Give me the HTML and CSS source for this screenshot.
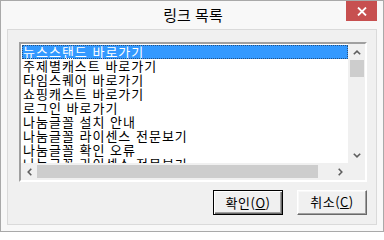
FILE: index.html
```html
<!DOCTYPE html>
<html lang="ko">
<head>
<meta charset="utf-8">
<title>링크 목록</title>
<link rel="stylesheet" href="styles.css">
</head>
<body>
<div class="window">
  <div class="titlebar">
    <span class="title">링크 목록</span>
    <div class="close">
      <svg width="10" height="9" viewBox="0 0 10 9"><path d="M1 0.5 L9 8.5 M9 0.5 L1 8.5" stroke="#fff" stroke-width="1.8" fill="none"/></svg>
    </div>
  </div>
  <div class="client">
    <div class="listbox">
      <ul class="items">
        <li class="item selected">뉴스스탠드 바로가기</li>
        <li class="item">주제별캐스트 바로가기</li>
        <li class="item">타임스퀘어 바로가기</li>
        <li class="item">쇼핑캐스트 바로가기</li>
        <li class="item">로그인 바로가기</li>
        <li class="item">나눔글꼴 설치 안내</li>
        <li class="item">나눔글꼴 라이센스 전문보기</li>
        <li class="item">나눔글꼴 확인 오류</li>
        <li class="item">나눔글꼴 라이센스 전문보기</li>
      </ul>
      <div class="vscroll">
        <div class="sbtn"><svg width="8" height="5" viewBox="0 0 8 5"><path d="M0.8 4.3 L4 1.2 L7.2 4.3" stroke="#5f5f5f" stroke-width="1.6" fill="none"/></svg></div>
        <div class="vthumb"></div>
        <div class="track"></div>
        <div class="sbtn"><svg width="8" height="5" viewBox="0 0 8 5"><path d="M0.8 0.7 L4 3.8 L7.2 0.7" stroke="#5f5f5f" stroke-width="1.6" fill="none"/></svg></div>
      </div>
      <div class="hscroll">
        <div class="sbtn"><svg width="5" height="8" viewBox="0 0 5 8"><path d="M4.3 0.8 L1.2 4 L4.3 7.2" stroke="#5f5f5f" stroke-width="1.6" fill="none"/></svg></div>
        <div class="hthumb"></div>
        <div class="track"></div>
        <div class="sbtn"><svg width="5" height="8" viewBox="0 0 5 8"><path d="M0.7 0.8 L3.8 4 L0.7 7.2" stroke="#5f5f5f" stroke-width="1.6" fill="none"/></svg></div>
      </div>
      <div class="corner"></div>
    </div>
    <div class="buttons">
      <div class="btn default">확인(<u>O</u>)</div>
      <div class="btn">취소(<u>C</u>)</div>
    </div>
  </div>
</div>
</body>
</html>
```

FILE: styles.css
```css
* { box-sizing: border-box; }
html, body { margin: 0; padding: 0; background: #ffffff; }
body { font-family: "Noto Sans CJK KR", "Noto Sans", sans-serif; }

.window {
  position: relative;
  width: 384px;
  height: 232px;
  border: 1px solid #a9a9a9;
  background: #f8f8f8;
  padding: 0 6px 6px 6px;
  display: flex;
  flex-direction: column;
}

.titlebar {
  height: 28px;
  display: flex;
  align-items: center;
  justify-content: center;
  flex: none;
}
.title {
  font-size: 15px;
  line-height: 28px;
  color: #000;
  padding-left: 2px;
}
.close {
  position: absolute;
  top: 0;
  right: 6px;
  width: 31px;
  height: 20px;
  background: #c75050;
  display: flex;
  align-items: center;
  justify-content: center;
}

.client {
  flex: 1;
  border: 1px solid #dadada;
  background: #f0f0f0;
  padding: 12px 9px 9px 11px;
  display: flex;
  flex-direction: column;
  gap: 8px;
}

.listbox {
  height: 140px;
  border-style: solid;
  border-width: 2px;
  border-color: #a0a0a0 #ffffff #ffffff #a0a0a0;
  box-shadow: inset 1px 1px 0 #696969, inset -1px -1px 0 #e3e3e3;
  background: #ffffff;
  display: grid;
  grid-template-columns: 1fr 17px;
  grid-template-rows: 1fr 17px;
}

.items {
  list-style: none;
  margin: 0;
  padding: 1px 0 0 1px;
  overflow: hidden;
  background: #fff;
}
.item {
  height: 14px;
  line-height: 14px;
  font-size: 13px;
  letter-spacing: 1px;
  color: #000;
  padding-left: 1px;
  white-space: nowrap;
}
.item.selected {
  background: #3399ff;
  color: #fff;
  outline: 1px dotted #244f80;
  outline-offset: -1px;
}

.vscroll {
  background: #f0f0f0;
  display: flex;
  flex-direction: column;
}
.vscroll .sbtn { height: 16px; width: 17px; }
.vthumb {
  height: 17px;
  margin: 0 0 0 2px;
  width: 14px;
  background: #cdcdcd;
}
.track { flex: 1; background: #f0f0f0; }

.hscroll {
  background: #f0f0f0;
  display: flex;
}
.hscroll .sbtn { width: 16px; height: 17px; }
.hthumb {
  width: 281px;
  margin: 2px 0 2px 0;
  background: #cdcdcd;
}
.sbtn {
  display: flex;
  align-items: center;
  justify-content: center;
  flex: none;
}
.corner { background: #f0f0f0; }

.buttons {
  display: flex;
  justify-content: flex-end;
  gap: 14px;
}
.btn {
  width: 70px;
  height: 25px;
  font-size: 13px;
  letter-spacing: 0.5px;
  line-height: 21px;
  color: #000;
  text-align: center;
  background: #f0f0f0;
  border-style: solid;
  border-width: 1px;
  border-color: #ffffff #696969 #696969 #ffffff;
  box-shadow: inset -1px -1px 0 #a0a0a0, inset 1px 1px 0 #f8f8f8;
}
.btn.default {
  border-color: #000;
  line-height: 23px;
  box-shadow: inset 1px 1px 0 #ffffff, inset -1px -1px 0 #696969, inset -2px -2px 0 #a0a0a0;
}
.btn u { text-underline-offset: 1px; }
```
